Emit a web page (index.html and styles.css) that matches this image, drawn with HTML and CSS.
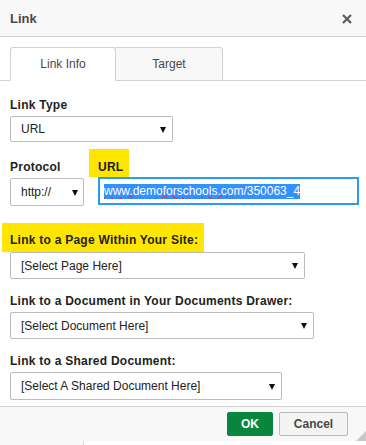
FILE: index.html
```html
<!DOCTYPE html>
<html lang="en">
<head>
    <meta charset="UTF-8">
    <title>Link</title>
    <link rel="stylesheet" href="styles.css">
</head>
<body>
    <div class="dialog">
        <div class="dialog-header">
            <span class="dialog-title">Link</span>
            <span class="close">
                <svg width="10" height="10" viewBox="0 0 10 10"><path d="M1 1L9 9M9 1L1 9" stroke="#5a5a5a" stroke-width="2.2"/></svg>
            </span>
        </div>

        <div class="tabs">
            <div class="tab active">Link Info</div>
            <div class="tab">Target</div>
        </div>

        <div class="dialog-body">
            <div class="field">
                <label class="label">Link Type</label>
                <div class="select-wrap w-type">
                    <select><option>URL</option></select>
                </div>
            </div>

            <div class="url-row">
                <div class="col-protocol">
                    <label class="label row-label">Protocol</label>
                    <div class="select-wrap w-protocol">
                        <select><option>http://</option></select>
                    </div>
                </div>
                <div class="col-url">
                    <label class="label row-label mark url-mark">URL</label>
                    <div class="url-input"><span class="sel"><span class="typo">www.demoforschools.com</span>/350063_4</span></div>
                </div>
            </div>

            <div class="field page-field">
                <label class="label mark page-mark">Link to a Page Within Your Site:</label>
                <div class="select-wrap w-page">
                    <select><option>[Select Page Here]</option></select>
                </div>
            </div>

            <div class="field doc-field">
                <label class="label">Link to a Document in Your Documents Drawer:</label>
                <div class="select-wrap w-doc">
                    <select><option>[Select Document Here]</option></select>
                </div>
            </div>

            <div class="field doc-field">
                <label class="label">Link to a Shared Document:</label>
                <div class="select-wrap w-shared">
                    <select><option>[Select A Shared Document Here]</option></select>
                </div>
            </div>
        </div>

        <div class="dialog-footer">
            <div class="buttons">
                <button class="btn btn-ok">OK</button>
                <button class="btn btn-cancel">Cancel</button>
            </div>
            <span class="grip"></span>
        </div>
        <div class="under"></div>
    </div>
</body>
</html>
```

FILE: styles.css
```css
* {
    margin: 0;
    padding: 0;
    box-sizing: border-box;
}

body {
    font-family: "Liberation Sans", Arial, sans-serif;
    font-size: 12px;
    color: #333;
    background: #fff;
    width: 366px;
    height: 445px;
    overflow: hidden;
}

.dialog {
    display: flex;
    flex-direction: column;
    height: 445px;
}

.dialog-header {
    height: 37px;
    background: #f8f8f8;
    border-bottom: 1px solid #d1d1d1;
    display: flex;
    align-items: center;
    justify-content: space-between;
    padding: 0 14px 0 10px;
}

.dialog-title {
    font-size: 13px;
    font-weight: bold;
    color: #484848;
}

.close {
    display: flex;
    margin-top: 1px;
}

/* Tabs */
.tabs {
    display: flex;
    margin-top: 10px;
    padding-left: 10px;
    border-bottom: 1px solid #d1d1d1;
}

.tab {
    height: 34px;
    width: 107px;
    display: flex;
    align-items: center;
    justify-content: center;
    background: #f8f8f8;
    border: 1px solid #d1d1d1;
    border-left: none;
    border-radius: 0 3px 0 0;
    color: #484848;
    margin-bottom: -1px;
}

.tab.active {
    width: 106px;
    background: #fff;
    border-left: 1px solid #d1d1d1;
    border-bottom-color: #fff;
    border-radius: 3px 3px 0 0;
}

/* Formulario */
.dialog-body {
    padding: 16px 0 0 10px;
    flex: 1;
}

.label {
    display: block;
    font-weight: bold;
    letter-spacing: 0.25px;
    color: #222;
    line-height: 16px;
}

.field .select-wrap {
    margin-top: 3px;
}

.select-wrap {
    position: relative;
    height: 26px;
}

.select-wrap select {
    appearance: none;
    -webkit-appearance: none;
    width: 100%;
    height: 100%;
    border: 1px solid #bcbcbc;
    border-radius: 2px;
    background: #fff;
    padding: 0 20px 0 10px;
    font-family: inherit;
    font-size: 12px;
    color: #222;
}

.select-wrap::after {
    content: "";
    position: absolute;
    right: 7px;
    top: 11px;
    border-left: 3.5px solid transparent;
    border-right: 3.5px solid transparent;
    border-top: 6px solid #111;
}

.w-type { width: 163px; }
.w-protocol { width: 74px; height: 28px; margin-top: 1px; }
.w-protocol::after { right: 6px; top: 12px; }
.w-page { width: 295px; height: 27px; }
.w-doc { width: 304px; height: 27px; }
.w-shared { width: 272px; height: 28px; }
.w-shared::after { top: 12px; }

.url-row {
    display: flex;
    margin-top: 7px;
}

.col-protocol {
    width: 79px;
}

.row-label {
    height: 28px;
    display: flex;
    align-items: flex-end;
    padding-bottom: 2px;
}

.mark {
    background: #ffe600;
}

.url-mark {
    display: inline-flex;
    padding: 0 6px 2px 9px;
}

.col-url {
    display: flex;
    flex-direction: column;
    align-items: flex-start;
}

.url-input {
    margin-left: 9px;
    width: 261px;
    height: 28px;
    border: 2px solid #2b9af3;
    padding-left: 4px;
    display: flex;
    align-items: center;
    font-size: 12px;
    color: #fff;
}

.sel {
    background: #3390ff;
    line-height: 15px;
}

.typo {
    text-decoration: underline wavy #e02020;
    text-decoration-thickness: 1px;
    text-underline-offset: 0;
}

.page-field {
    margin-top: 17px;
    margin-left: -8px;
}

.page-mark {
    display: inline-flex;
    align-items: flex-end;
    height: 29px;
    padding: 0 6px 4px 8px;
}

.page-field .select-wrap {
    margin-top: 0;
    margin-left: 8px;
}

.doc-field {
    margin-top: 14px;
}

/* Pie */
.dialog-footer {
    position: relative;
    background: #f8f8f8;
    border-top: 1px solid #d1d1d1;
    height: 35px;
    padding: 5px 18px 0 0;
}

.buttons {
    display: flex;
    justify-content: flex-end;
    gap: 6px;
}

.btn {
    height: 24px;
    font-family: inherit;
    font-size: 12px;
    font-weight: bold;
    border-radius: 2px;
    cursor: pointer;
}

.btn-ok {
    width: 46px;
    background: #09863e;
    border: 1px solid #09863e;
    color: #fff;
}

.btn-cancel {
    width: 69px;
    background: #f4f4f4;
    border: 1px solid #bcbcbc;
    color: #484848;
}

.grip {
    position: absolute;
    right: 0;
    bottom: 0;
    border-left: 10px solid transparent;
    border-bottom: 10px solid #c8c8c8;
}

.under {
    height: 4px;
    background: #f8f8f8;
    padding-left: 83px;
}

.under::before {
    content: "";
    display: block;
    height: 100%;
    background: #fff;
    border-left: 1px solid #d8d8d8;
}
```
